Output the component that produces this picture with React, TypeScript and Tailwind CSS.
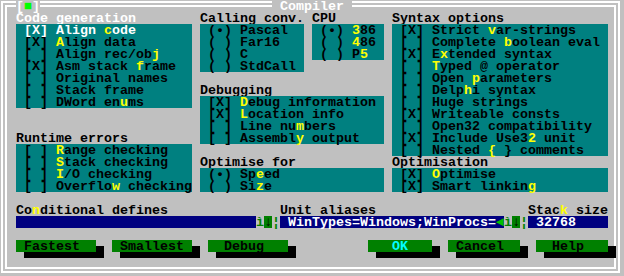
type Item = { t: string; on?: boolean; focus?: boolean };

const codeGen: Item[] = [
  { t: "Align ~c~ode", on: true, focus: true },
  { t: "~A~lign data", on: true },
  { t: "Align rec/ob~j~" },
  { t: "Asm stack ~f~rame", on: true },
  { t: "Original names" },
  { t: "Stack frame" },
  { t: "DWord en~u~ms" },
];

const callingConv: Item[] = [{ t: "Pascal", on: true }, { t: "Far16" }, { t: "C" }, { t: "StdCall" }];

const cpu: Item[] = [{ t: "~3~86", on: true }, { t: "~4~86" }, { t: "P~5~" }];

const syntax: Item[] = [
  { t: "Strict ~v~ar-strings", on: true },
  { t: "Complete ~b~oolean eval" },
  { t: "E~x~tended syntax", on: true },
  { t: "~T~yped @ operator" },
  { t: "Open ~p~arameters" },
  { t: "Delp~h~i syntax" },
  { t: "Huge strings" },
  { t: "Writeable consts", on: true },
  { t: "Open32 compatibility" },
  { t: "Include Use3~2~ unit", on: true },
  { t: "Nested ~{~ } comments" },
];

const runtime: Item[] = [
  { t: "~R~ange checking" },
  { t: "~S~tack checking" },
  { t: "~I~/O checking" },
  { t: "Overflo~w~ checking" },
];

const debugging: Item[] = [
  { t: "~D~ebug information", on: true },
  { t: "~L~ocation info", on: true },
  { t: "Line nu~m~bers" },
  { t: "Assembl~y~ output" },
];

const optFor: Item[] = [{ t: "Sp~e~ed", on: true }, { t: "Si~z~e" }];

const optimisation: Item[] = [{ t: "~O~ptimise", on: true }, { t: "Smart linkin~g~", on: true }];

// "~x~" marks a hot key, drawn in yellow like Turbo Vision does
function Hot({ text }: { text: string }) {
  return (
    <>
      {text.split("~").map((s, i) =>
        i % 2 ? (
          <span key={i} className="text-[#ffff00]">
            {s}
          </span>
        ) : (
          <span key={i}>{s}</span>
        ),
      )}
    </>
  );
}

function Label({ text, place, color = "text-black" }: { text: string; place: string; color?: string }) {
  return (
    <div className={`${place} whitespace-pre ${color}`}>
      <Hot text={text} />
    </div>
  );
}

function Cluster({ items, place, radio }: { items: Item[]; place: string; radio?: boolean }) {
  return (
    <div className={`${place} flex flex-col bg-[#008080]`}>
      {items.map((it) => {
        const mark = radio ? (it.on ? " (•) " : " ( ) ") : it.on ? " [X] " : " [ ] ";
        return (
          <div key={it.t} className={`h-[12px] whitespace-pre ${it.focus ? "text-white" : "text-black"}`}>
            {mark}
            <Hot text={it.t} />
          </div>
        );
      })}
    </div>
  );
}

function History({ place }: { place: string }) {
  return (
    <div className={`${place} flex`}>
      <span className="w-[8px] text-[#008000]">ì</span>
      <span className="h-[12px] w-[8px] bg-[#008000] text-black">↓</span>
      <span className="w-[8px] text-[#008000]">¦</span>
    </div>
  );
}

function Button({ label, place, color = "text-black" }: { label: string; place: string; color?: string }) {
  return (
    <div className={`${place} flex flex-col`}>
      <div className="flex h-[12px]">
        <div className={`h-[12px] flex-1 whitespace-pre bg-[#008000] ${color}`}>{label}</div>
        <div className="mt-[6px] h-[6px] w-[8px] bg-black" />
      </div>
      <div className="ml-[8px] h-[6px] bg-black" />
    </div>
  );
}

export default function App() {
  return (
    <div className="grid h-[276px] w-[624px] grid-cols-[repeat(78,8px)] grid-rows-[repeat(23,12px)] overflow-hidden bg-[#c0c0c0] font-['Liberation_Mono','DejaVu_Sans_Mono',monospace] text-[13.333px] leading-[14px] font-bold">
      {/* double frame */}
      <div className="col-[1/-1] row-[1/-1] pt-[1px] pr-[4px] pb-[3px] pl-[1px]">
        <div className="h-full border-2 border-white p-[2px]">
          <div className="h-full border-2 border-white" />
        </div>
      </div>
      <div className="col-[3/span_3] row-[1] h-[12px] whitespace-pre bg-[#c0c0c0] text-white">
        [<span className="text-[#00ff00]">■</span>]
      </div>
      <div className="col-[35/span_10] row-[1] h-[12px] whitespace-pre bg-[#c0c0c0] text-white"> Compiler </div>

      <Label text="Code generation" place="col-[3/span_22] row-[2]" color="text-white" />
      <Cluster items={codeGen} place="col-[3/span_22] row-[3/span_7]" />

      <Label text="Calling conv." place="col-[26/span_13] row-[2]" />
      <Cluster items={callingConv} place="col-[26/span_13] row-[3/span_4]" radio />

      <Label text="CPU" place="col-[40/span_9] row-[2]" />
      <Cluster items={cpu} place="col-[40/span_9] row-[3/span_3]" radio />

      <Label text="Syntax options" place="col-[50/span_27] row-[2]" />
      <Cluster items={syntax} place="col-[50/span_27] row-[3/span_11]" />

      <Label text="Debugging" place="col-[26/span_23] row-[8]" />
      <Cluster items={debugging} place="col-[26/span_23] row-[9/span_4]" />

      <Label text="Runtime errors" place="col-[3/span_22] row-[12]" />
      <Cluster items={runtime} place="col-[3/span_22] row-[13/span_4]" />

      <Label text="Optimise for" place="col-[26/span_23] row-[14]" />
      <Cluster items={optFor} place="col-[26/span_23] row-[15/span_2]" radio />

      <Label text="Optimisation" place="col-[50/span_27] row-[14]" />
      <Cluster items={optimisation} place="col-[50/span_27] row-[15/span_2]" />

      <Label text="Co~n~ditional defines" place="col-[3/span_30] row-[18]" />
      <div className="col-[3/span_30] row-[19] h-[12px] bg-[#000080]" />
      <History place="col-[33/span_3] row-[19]" />

      <Label text="Unit aliases" place="col-[36/span_28] row-[18]" />
      <div className="col-[36/span_28] row-[19] h-[12px] whitespace-pre bg-[#000080] text-white">
        {" WinTypes=Windows;WinProcs="}
        <span className="text-[#00c000]">◄</span>
      </div>
      <History place="col-[64/span_3] row-[19]" />

      <Label text="Stac~k~ size" place="col-[67/span_10] row-[18]" />
      <div className="col-[67/span_10] row-[19] h-[12px] whitespace-pre bg-[#000080] text-white"> 32768</div>

      <Button label=" Fastest" place="col-[3/span_11] row-[21/span_2]" />
      <Button label=" Smallest" place="col-[15/span_11] row-[21/span_2]" />
      <Button label="  Debug" place="col-[27/span_11] row-[21/span_2]" />
      <Button label="   OK" place="col-[47/span_9] row-[21/span_2]" color="text-[#00ffff]" />
      <Button label=" Cancel" place="col-[57/span_10] row-[21/span_2]" />
      <Button label="  Help" place="col-[68/span_10] row-[21/span_2]" />
    </div>
  );
}
